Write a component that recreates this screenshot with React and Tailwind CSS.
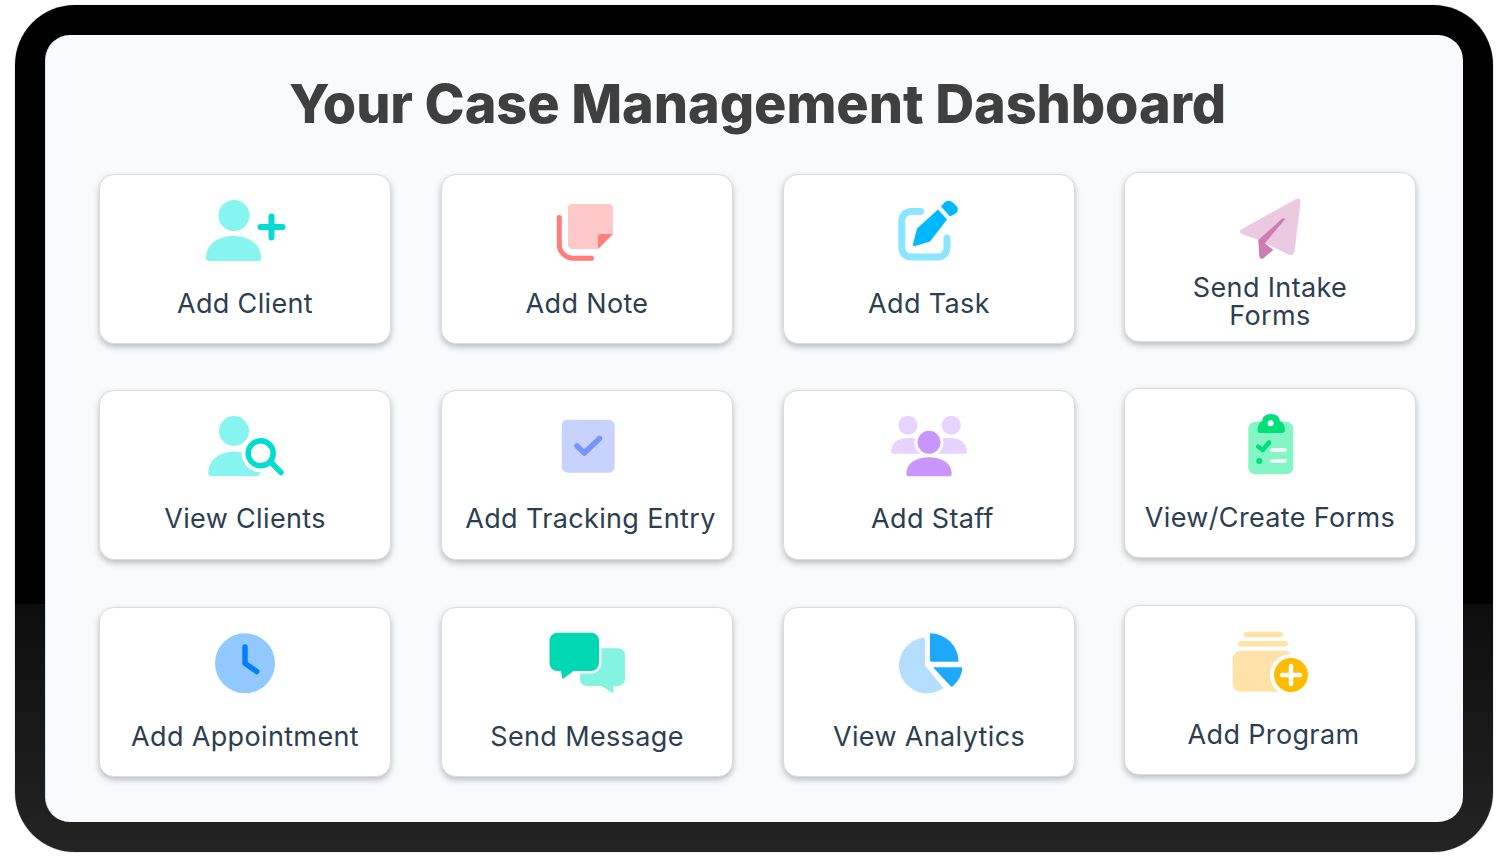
import React from "react";

const AQUA_LIGHT = "#86f5ef";
const AQUA = "#00dcd0";

// every drawing uses page coordinates through its viewBox: a 100x70 window on the card
function Glyph({ x, y, children }) {
  return (
    <svg viewBox={`${x} ${y} 100 70`} className="w-[100px] h-[70px] shrink-0">
      {children}
    </svg>
  );
}

const AddClientIcon = () => (
  <Glyph x={195} y={194}>
    <circle cx="234" cy="215.5" r="15.5" fill={AQUA_LIGHT} />
    <path d="M209 261H258Q261 261 261 258C261 245 250 236 233.5 236C217 236 206 245 206 258Q206 261 209 261Z" fill={AQUA_LIGHT} />
    <path d="M260.5 227H282.5M271.5 216.5V237.5" stroke={AQUA} strokeWidth="6" strokeLinecap="round" fill="none" />
  </Glyph>
);

const AddNoteIcon = () => (
  <Glyph x={537} y={194}>
    <path d="M572 204H609a4 4 0 0 1 4 4V234L598 249H572a4 4 0 0 1-4-4V208a4 4 0 0 1 4-4Z" fill="#ffc9c9" />
    <path d="M613 234H601a3 3 0 0 0-3 3V249Z" fill="#ff7f7a" />
    <path d="M559.3 217.5V244a14 14 0 0 0 14 14.3H591.5" stroke="#ff7d78" strokeWidth="5" strokeLinecap="round" fill="none" />
  </Glyph>
);

const AddTaskIcon = () => (
  <Glyph x={879} y={194}>
    <path d="M920.5 211.5H911a9 9 0 0 0-9.2 9V248a9 9 0 0 0 9 9H938a9 9 0 0 0 9-9V238" stroke="#8ce5ff" strokeWidth="7" strokeLinecap="round" fill="none" />
    <path d="M938 209.5L947 219.5L930 241.5L915 246Q912.5 246.5 913 244L917 228.5Z" fill="#00b8ff" />
    <path d="M941 206.5L944.5 202.5Q948 199.5 952 202L956 205.5Q959.5 209 956.5 213L950 216.5Z" fill="#00b8ff" />
  </Glyph>
);

const SendFormsIcon = () => (
  <Glyph x={1220} y={192}>
    <path d="M1295 199.5Q1301 196.5 1300.5 203L1294.5 251Q1293.5 256.5 1288.5 254.5L1265 243L1284.5 220Q1285 217 1282 218.5L1258.5 240L1242 234Q1238 232 1241 229.5Z" fill="#ebc9e1" />
    <path d="M1282 218.5Q1285 217 1284.5 220L1265 243.3L1273.3 250L1263 258.5Q1260 260 1259.3 256L1258.3 240Z" fill="#ce7cb4" />
  </Glyph>
);

const ViewClientsIcon = () => (
  <Glyph x={195} y={410}>
    <circle cx="234" cy="431" r="15" fill={AQUA_LIGHT} />
    <path d="M211 476H257Q260 476 260 473C260 460 249 451.7 234 451.7C219 451.7 208.3 460 208.3 473Q208.3 476 211 476Z" fill={AQUA_LIGHT} />
    <circle cx="260.7" cy="453.3" r="19" fill="#fff" />
    <circle cx="260.7" cy="453.3" r="12.5" stroke={AQUA} strokeWidth="5.5" fill="none" />
    <path d="M271.7 463L281 472.5" stroke={AQUA} strokeWidth="5.5" strokeLinecap="round" fill="none" />
  </Glyph>
);

const TrackingIcon = () => (
  <Glyph x={537} y={410}>
    <rect x="561.7" y="419.7" width="53" height="53" rx="6" fill="#c8d2ff" />
    <path d="M577 446L584.3 453L599.5 438.5" stroke="#7695ff" strokeWidth="5.5" strokeLinecap="round" strokeLinejoin="round" fill="none" />
  </Glyph>
);

const AddStaffIcon = () => (
  <Glyph x={879} y={410}>
    <circle cx="908" cy="425.3" r="9.5" fill="#e7d3ff" />
    <circle cx="951.3" cy="425.3" r="9.5" fill="#e7d3ff" />
    <path d="M891 452Q892 438 908 438H925V453.7H893Q891 453.7 891 452Z" fill="#e7d3ff" />
    <path d="M967 452Q966 438 950 438H933V453.7H965Q967 453.7 967 452Z" fill="#e7d3ff" />
    <circle cx="929" cy="442.3" r="14.5" fill="#fff" />
    <circle cx="929" cy="442.3" r="11.5" fill="#c996ff" />
    <path d="M908.5 476.3H949.5Q951.7 476.3 951.7 474C951.7 464 943 457.3 929 457.3C915 457.3 906.3 464 906.3 474Q906.3 476.3 908.5 476.3Z" fill="#c996ff" />
  </Glyph>
);

const FormsIcon = () => (
  <Glyph x={1220} y={408}>
    <rect x="1248.3" y="421.7" width="45" height="52.6" rx="7" fill="#84f5c4" />
    <path d="M1257.5 430Q1258 423 1262 421Q1263 414 1271 414Q1279 414 1280 421Q1284.5 423 1285 430Q1285 433 1282 433H1260Q1257.5 433 1257.5 430Z" fill="#00e07a" />
    <circle cx="1270.7" cy="423.3" r="3" fill="#fff" />
    <path d="M1258.3 446.7L1262.7 450L1269 442.5" stroke="#00e07a" strokeWidth="4.5" strokeLinecap="round" strokeLinejoin="round" fill="none" />
    <circle cx="1259.3" cy="461" r="3" fill="#00e07a" />
    <path d="M1272 450H1285M1272 461H1285" stroke="#fff" strokeWidth="3.5" strokeLinecap="round" />
  </Glyph>
);

const AppointmentIcon = () => (
  <Glyph x={195} y={627}>
    <circle cx="245" cy="663.3" r="30" fill="#90c8ff" />
    <path d="M245 647V663.3L256.7 671.5" stroke="#0080ff" strokeWidth="5.5" strokeLinecap="round" strokeLinejoin="round" fill="none" />
  </Glyph>
);

const MessageIcon = () => (
  <Glyph x={537} y={627}>
    <path d="M587 648.3H618a7 7 0 0 1 7 7V679a7 7 0 0 1-7 7H613.5V692.5Q613 694 611.5 692.5L601.7 686H587a7 7 0 0 1-7-7V655.3a7 7 0 0 1 7-7Z" fill="#84f3e0" />
    <path d="M557.5 632.7H591a8 8 0 0 1 8 8V663a8 8 0 0 1-8 8H573.5L563.5 678.5Q562 679.5 562 677.5L561 671H557.5a8 8 0 0 1-8-8V640.7a8 8 0 0 1 8-8Z" fill="#00d8b4" stroke="#fff" strokeWidth="5" paintOrder="stroke" />
  </Glyph>
);

const AnalyticsIcon = () => (
  <Glyph x={879} y={627}>
    <path d="M924.5 637.5A28 28 0 1 0 943.5 688L925 665.5V640Q925 637.5 924.5 637.5Z" fill="#b3deff" />
    <path d="M930 633.3A28.5 28.5 0 0 1 958.5 661.7H931.5Q930 661.7 930 660Z" fill="#1fa8ff" />
    <path d="M933 667.3H961Q962.5 667.3 962.3 669Q961 679 953 686Q951.5 687.3 950.5 686Z" fill="#1fa8ff" />
  </Glyph>
);

const ProgramIcon = () => (
  <Glyph x={1220} y={625}>
    <path d="M1246.5 634.5H1280M1241 643.7H1285" stroke="#ffe2a8" strokeWidth="5.5" strokeLinecap="round" />
    <rect x="1232.7" y="650.7" width="60" height="41" rx="8" fill="#ffe2a8" />
    <circle cx="1291" cy="675" r="21" fill="#fff" />
    <circle cx="1291" cy="675" r="17" fill="#ffbb00" />
    <path d="M1282 675H1300M1291 666V684" stroke="#fff" strokeWidth="4.5" strokeLinecap="round" />
  </Glyph>
);

const columns = [
  {
    className: "pt-[2px]",
    cards: [
      { label: "Add Client", icon: <AddClientIcon /> },
      { label: "View Clients", icon: <ViewClientsIcon />, labelClass: "mb-[2px]" },
      { label: "Add Appointment", icon: <AppointmentIcon />, className: "mt-px" },
    ],
  },
  {
    className: "pt-[2px]",
    cards: [
      { label: "Add Note", icon: <AddNoteIcon /> },
      { label: "Add Tracking Entry", icon: <TrackingIcon />, labelClass: "pl-[7px] mb-[2px]" },
      { label: "Send Message", icon: <MessageIcon />, className: "mt-px" },
    ],
  },
  {
    className: "pt-[2px]",
    cards: [
      { label: "Add Task", icon: <AddTaskIcon /> },
      { label: "Add Staff", icon: <AddStaffIcon />, labelClass: "pl-[7px] mb-[2px]" },
      { label: "View Analytics", icon: <AnalyticsIcon />, className: "mt-px" },
    ],
  },
  {
    className: "-ml-px",
    cards: [
      { label: "Send Intake Forms", icon: <SendFormsIcon />, labelClass: "px-[40px]" },
      { label: "View/Create Forms", icon: <FormsIcon /> },
      { label: "Add Program", icon: <ProgramIcon />, className: "mt-px", labelClass: "pl-[7px]" },
    ],
  },
];

function ActionCard({ label, icon, className = "", labelClass = "" }) {
  return (
    <div className={`w-[292px] h-[170px] flex flex-col items-center pt-[19px] bg-white rounded-[15px] border border-[#dcdcdc] shadow-[0_3px_6px_rgba(0,0,0,0.25)] ${className}`}>
      {icon}
      <div className="flex-1 w-full flex items-center justify-center">
        <span className={`text-center text-[27px] leading-[28px] tracking-[0.35px] text-[#2c3e50] ${labelClass}`}>
          {label}
        </span>
      </div>
    </div>
  );
}

export default function App() {
  return (
    <div className="w-[1509px] h-[858px] bg-white pt-[5px] pl-[15px] font-['Inter',sans-serif] overflow-hidden">
      <div className="w-[1478px] h-[847px] p-[30px] rounded-[60px] bg-[linear-gradient(to_bottom,#000_0%,#000_70.7%,#0d0d0d_70.7%,#242424_100%)] shadow-[0_0_1px_rgba(0,0,0,0.6)]">
        <div className="w-[1418px] h-[787px] pt-[34px] bg-[#f9fafc] rounded-[25px] border-l border-[#d6e2f0]">
          <h1 className="h-[68px] pl-[6px] text-center text-[54px] leading-[70px] font-extrabold tracking-[-0.1px] text-[#3f3f3f]">
            Your Case Management Dashboard
          </h1>
          <div className="mt-[35px] pl-[53px] flex gap-[50px]">
            {columns.map((col, i) => (
              <div key={i} className={`flex flex-col gap-[46px] ${col.className}`}>
                {col.cards.map((card) => (
                  <ActionCard key={card.label} {...card} />
                ))}
              </div>
            ))}
          </div>
        </div>
      </div>
    </div>
  );
}
